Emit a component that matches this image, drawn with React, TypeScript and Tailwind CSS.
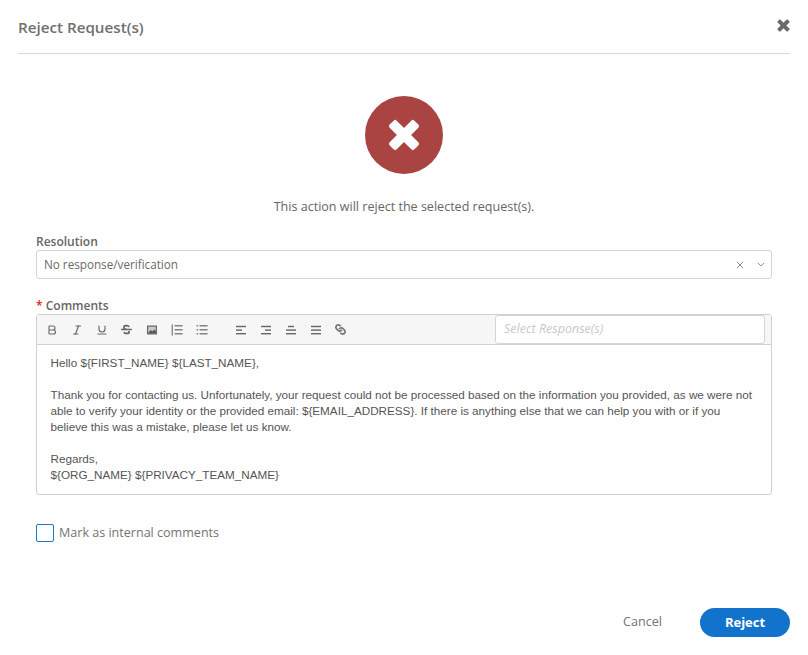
import React from "react";
import { Bold, Italic, Underline } from "lucide-react";
import { FaStrikethrough, FaLink } from "react-icons/fa";

const sans = "font-['Open_Sans',sans-serif]";

function Cross({ className }: { className: string }) {
  return (
    <svg viewBox="0 0 32 32" className={className} fill="currentColor" aria-hidden="true">
      <rect x="11" y="-1.5" width="10" height="35" rx="2.2" transform="rotate(45 16 16)" />
      <rect x="11" y="-1.5" width="10" height="35" rx="2.2" transform="rotate(-45 16 16)" />
    </svg>
  );
}

function Lines({ rows }: { rows: [number, number][] }) {
  return (
    <svg viewBox="0 0 12 12" className="h-[12px] w-[12px]" fill="currentColor" aria-hidden="true">
      {rows.map(([x, w], i) => (
        <rect key={i} x={x} y={1.8 + i * 3.6} width={w} height="1.4" />
      ))}
    </svg>
  );
}

function ImageIcon() {
  return (
    <svg viewBox="0 0 12 12" className="h-[12px] w-[12px]" aria-hidden="true">
      <rect x="1" y="1.5" width="10" height="9" fill="#666666" />
      <rect x="2.2" y="2.7" width="7.6" height="6.4" fill="#c9c9c9" />
      <path d="M2.2 9.1l2.6-3 1.6 1.5 1.8-2.2 1.6 1.8v1.9z" fill="#555555" />
    </svg>
  );
}

function ListIcon({ ordered }: { ordered?: boolean }) {
  return (
    <svg viewBox="0 0 12 12" className="h-[12px] w-[12px]" fill="currentColor" aria-hidden="true">
      {[1.2, 5.2, 9.2].map((y) => (
        <rect key={y} x="3.6" y={y} width="8" height="1.2" />
      ))}
      {ordered ? (
        <rect x="0.6" y="0.4" width="1.4" height="11.2" opacity="0.75" />
      ) : (
        [1.2, 5.2, 9.2].map((y) => <rect key={y} x="0.6" y={y} width="1.6" height="1.2" />)
      )}
    </svg>
  );
}

const thin = "h-[12px] w-[12px]";
const tools: React.ReactNode[][] = [
  [
    <Bold className={thin} strokeWidth={2.2} />,
    <Italic className={thin} strokeWidth={2.2} />,
    <Underline className={thin} strokeWidth={2.2} />,
    <FaStrikethrough className="h-[11px] w-[11px]" />,
    <ImageIcon />,
    <ListIcon ordered />,
    <ListIcon />,
  ],
  [
    <Lines rows={[[1, 10], [1, 6], [1, 10]]} />,
    <Lines rows={[[1, 10], [5, 6], [1, 10]]} />,
    <Lines rows={[[3, 6], [1, 10], [1, 10]]} />,
    <Lines rows={[[1, 10], [1, 10], [1, 10]]} />,
    <FaLink className="h-[11px] w-[11px] rotate-90 text-[#777777]" />,
  ],
];

export default function App() {
  return (
    <div className={`${sans} relative flex h-[655px] w-[808px] flex-col overflow-hidden bg-white text-[#696969]`}>
      <header className="mx-[18px] flex h-[54px] shrink-0 items-center justify-between border-b border-[#d8d8d8]">
        <h1 className="pt-[1px] text-[15.2px] font-semibold leading-5 text-[#707070]">Reject Request(s)</h1>
        <Cross className="mb-[3px] h-[13px] w-[13px] text-[#6a6a6a]" />
      </header>

      <div className="flex flex-col items-center pt-[42px]">
        <div className="flex h-[78px] w-[78px] items-center justify-center rounded-full bg-[#a94442] text-white">
          <Cross className="h-[32px] w-[32px]" />
        </div>
        <p className="mt-[23px] text-[12.55px] leading-5 text-[#666666]">This action will reject the selected request(s).</p>
      </div>

      <div className="mx-[36px] mt-[16px]">
        <label className="block text-[12px] font-semibold leading-[17px] text-[#666666]">Resolution</label>
        <div className="flex h-[29px] items-center rounded-[3px] border border-[#d5d5d5] pl-[7px] pr-[6px] text-[11.7px] text-[#696969]">
          <span className="flex-1">No response/verification</span>
          <svg viewBox="0 0 10 10" className="h-[8px] w-[8px] text-[#6e6e6e]" fill="none" stroke="currentColor" strokeWidth="1"><path d="M1 1l8 8M9 1l-8 8" /></svg>
          <svg viewBox="0 0 10 6" className="ml-[13px] h-[5px] w-[8px] text-[#6e6e6e]" fill="none" stroke="currentColor" strokeWidth="1"><path d="M1 1l4 4 4-4" /></svg>
        </div>

        <label className="mt-[18px] block text-[12px] font-semibold leading-[17px] text-[#666666]">
          <span className="text-[#e02020]">*</span> Comments
        </label>
        <div className="rounded-[3px] border border-[#d0d0d0]">
          <div className="flex h-[30px] items-center border-b border-[#d0d0d0] bg-[#f6f6f6] pl-[2px] pr-[6px]">
            {tools.map((group, g) => (
              <div key={g} className={`flex ${g === 1 ? "ml-[14px]" : ""}`}>
                {group.map((icon, i) => (
                  <span key={i} className="flex h-[25px] w-[25px] items-center justify-center text-[#666666]">
                    {icon}
                  </span>
                ))}
              </div>
            ))}
            <div className="ml-auto flex h-[29px] w-[270px] items-center rounded-[3px] border border-[#d5d5d5] bg-white pl-[8px] text-[12.5px] italic text-[#c8c8c8]">
              Select Response(s)
            </div>
          </div>
          <div className="h-[149px] pl-[13.5px] pr-[14px] pt-[10px] font-['Liberation_Sans',Arial,sans-serif] text-[11.7px] leading-4 text-[#555555]">
            <p>Hello ${"{"}FIRST_NAME{"}"} ${"{"}LAST_NAME{"}"},</p>
            <p className="mt-4">
              Thank you for contacting us. Unfortunately, your request could not be processed based on the information you provided, as we were not able to verify your identity or the provided email: ${"{"}EMAIL_ADDRESS{"}"}. If there is anything else that we can help you with or if you believe this was a mistake, please let us know.
            </p>
            <p className="mt-4">Regards,</p>
            <p>${"{"}ORG_NAME{"}"} ${"{"}PRIVACY_TEAM_NAME{"}"}</p>
          </div>
        </div>

        <label className="mt-[28px] flex items-center gap-[5px] text-[12.55px] text-[#737373]">
          <span className="h-[18px] w-[18px] rounded-[2px] border border-[#1976d2] bg-white" />
          <span className="pt-[1px]">Mark as internal comments</span>
        </label>
      </div>

      <footer className="mt-auto mb-[18px] mr-[18px] flex items-center justify-end">
        <button className="mr-[38px] text-[12.6px] text-[#737373]">Cancel</button>
        <button className="h-[29px] w-[90px] rounded-full bg-[#1273cc] text-[13px] font-bold text-white">Reject</button>
      </footer>
    </div>
  );
}
